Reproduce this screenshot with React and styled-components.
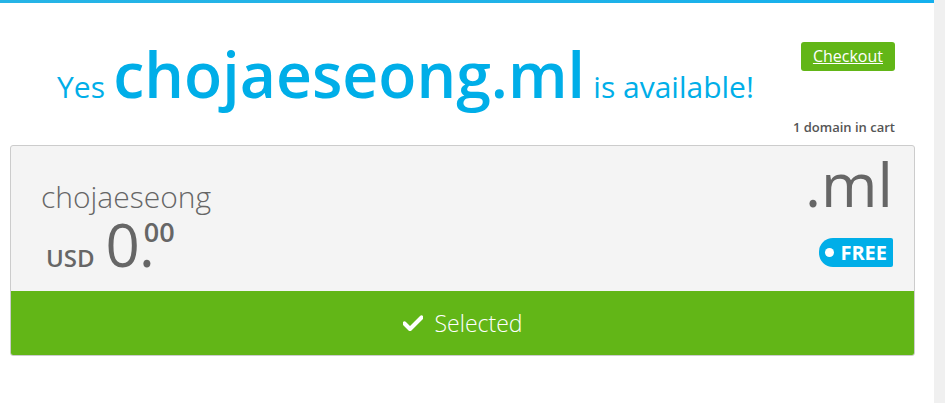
import React from 'react';
import { createGlobalStyle, styled } from 'styled-components';

const GlobalStyle = createGlobalStyle`
  html, body {
    margin: 0;
    padding: 0;
    background: #f0f0f0;
  }
  body {
    font-family: 'Open Sans', 'Liberation Sans', sans-serif;
  }
`;

const domain = { sld: 'chojaeseong', tld: '.ml' };

function App() {
  return (
    <>
      <GlobalStyle />
      <Page>
        <TopBar />
        <HeaderRow>
          <Headline>
            <Small>Yes</Small> <Big>{domain.sld + domain.tld}</Big> <Small>is available!</Small>
          </Headline>
          <CartBox>
            <CheckoutBtn href="#">Checkout</CheckoutBtn>
            <CartCount>1 domain in cart</CartCount>
          </CartBox>
        </HeaderRow>
        <Card>
          <CardBody>
            <Left>
              <Sld>{domain.sld}</Sld>
              <Price>
                <Currency>USD</Currency>
                <Whole>0.</Whole>
                <Cents>00</Cents>
              </Price>
            </Left>
            <Right>
              <Tld>{domain.tld}</Tld>
              <Badge>FREE</Badge>
            </Right>
          </CardBody>
          <SelectedBar>
            <svg width="20" height="16" viewBox="0 0 20 16">
              <path d="M1.5 8.5 L7 14 L18.5 2.5" fill="none" stroke="#fff" strokeWidth="4.2" strokeLinecap="round" strokeLinejoin="round" />
            </svg>
            Selected
          </SelectedBar>
        </Card>
      </Page>
    </>
  );
}

const Page = styled.div`
  width: 934px;
  height: 403px;
  background: #fff;
  overflow: hidden;
`;

const TopBar = styled.div`
  height: 3px;
  background: linear-gradient(90deg, #26b4e6, #1fb2e8 60%, #14b0ee);
`;

const HeaderRow = styled.div`
  display: flex;
  align-items: flex-start;
  padding: 0 39px 0 10px;
  height: 139px;
`;

const Headline = styled.h1`
  flex: 1;
  margin: 40px 0 0;
  padding-left: 8px;
  text-align: center;
  color: #00aee8;
  font-weight: 400;
  line-height: 1;
  white-space: nowrap;
`;

const Small = styled.span`
  font-size: 30px;
`;

const Big = styled.span`
  font-size: 62.5px;
  font-weight: 600;
`;

const CartBox = styled.div`
  display: flex;
  flex-direction: column;
  align-items: flex-end;
  padding-top: 39px;
`;

const CheckoutBtn = styled.a`
  display: block;
  background: #62b617;
  color: #fff;
  font-size: 16px;
  line-height: 21px;
  padding: 4px 12px;
  border-radius: 3px;
  text-decoration: underline;
`;

const CartCount = styled.div`
  margin-top: 47px;
  font-size: 13px;
  font-weight: 600;
  color: #555;
`;

const Card = styled.div`
  margin: 3px 19px 0 10px;
  border: 1px solid #ccc;
  border-radius: 3px;
  overflow: hidden;
  background: #f4f4f4;
`;

const CardBody = styled.div`
  display: flex;
  justify-content: space-between;
  height: 145px;
  padding: 0 21px 0 30px;
`;

const Left = styled.div`
  padding-top: 32px;
`;

const Sld = styled.div`
  font-size: 30px;
  font-weight: 300;
  color: #666;
  line-height: 38px;
`;

const Price = styled.div`
  display: flex;
  align-items: flex-start;
  color: #666;
  margin-top: 2px;
  padding-left: 5px;
`;

const Currency = styled.span`
  font-size: 24px;
  font-weight: 600;
  margin-top: 23px;
  margin-right: 11px;
`;

const Whole = styled.span`
  font-size: 60px;
  line-height: 52px;
  font-weight: 400;
  letter-spacing: -1px;
`;

const Cents = styled.span`
  margin-left: -10px;
  font-size: 27px;
  font-weight: 600;
  line-height: 28px;
`;

const Right = styled.div`
  display: flex;
  flex-direction: column;
  align-items: flex-end;
  padding-top: 2px;
`;

const Tld = styled.div`
  font-size: 61px;
  color: #666;
  line-height: 72px;
`;

const Badge = styled.span`
  position: relative;
  margin-top: 18px;
  background: #00aee8;
  color: #fff;
  font-size: 20px;
  font-weight: 700;
  line-height: 29px;
  padding: 0 6px 0 21px;
  border-radius: 14px 2px 2px 14px;
  &::before {
    content: '';
    position: absolute;
    left: 6px;
    top: 10px;
    width: 9px;
    height: 9px;
    border-radius: 50%;
    background: #fff;
  }
`;

const SelectedBar = styled.div`
  display: flex;
  align-items: center;
  justify-content: center;
  gap: 12px;
  height: 64px;
  background: #62b617;
  color: #fff;
  font-size: 23px;
  font-weight: 300;
`;

export default App;
